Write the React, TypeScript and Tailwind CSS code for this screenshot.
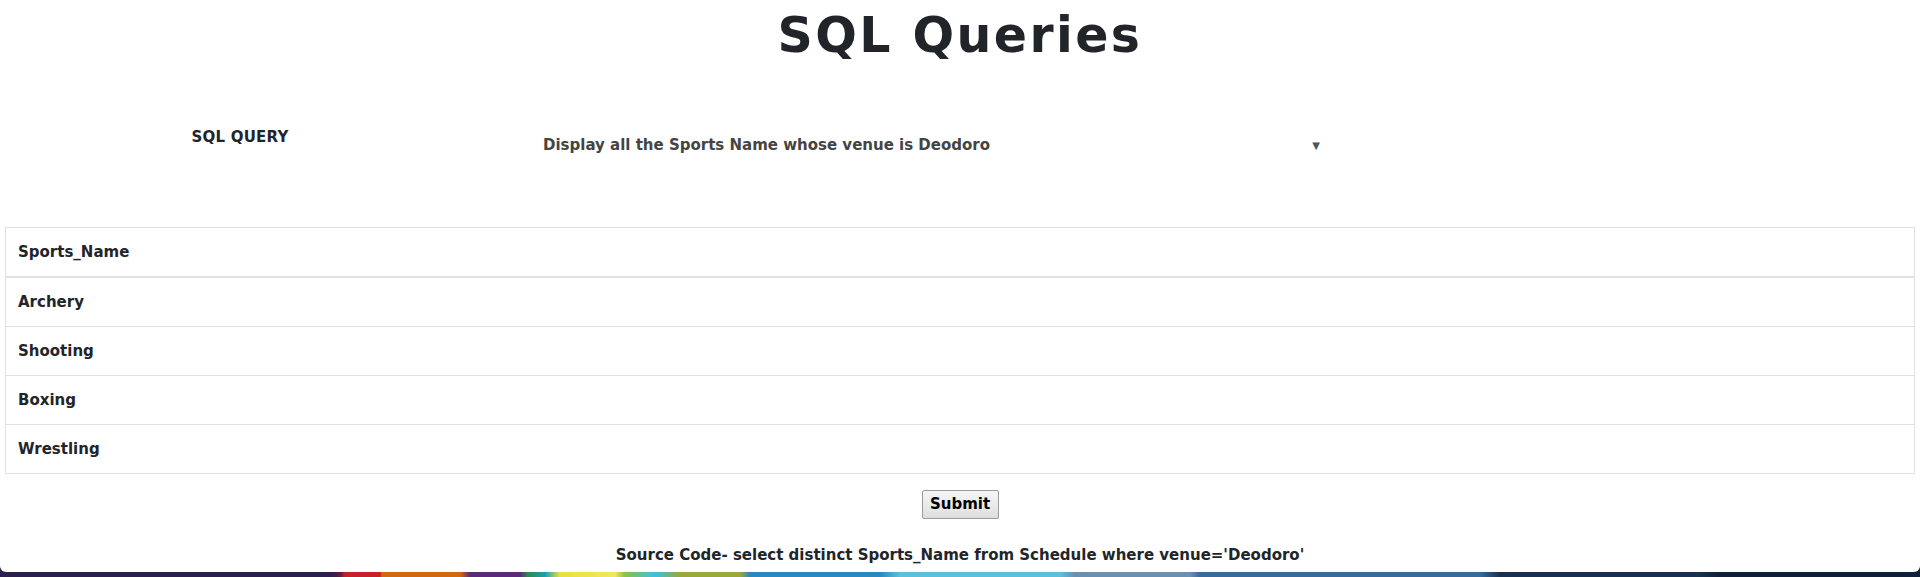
const rows = ['Archery', 'Shooting', 'Boxing', 'Wrestling'];

const font = { fontFamily: '"DejaVu Sans", "Noto Sans", sans-serif' };

const App = () => {
    return (
        <div
            className="h-[577px] w-full overflow-hidden bg-[linear-gradient(90deg,#2b1f4d_0px,#2b1f4d_330px,#5a1a3c_340px,#c4212b_345px,#c4212b_380px,#d2690f_382px,#d2690f_460px,#5c2a7a_470px,#5c2a7a_520px,#2e8a4a_528px,#1aa0b0_545px,#e8e040_560px,#f0e85a_615px,#8cc04a_625px,#3cc0e0_655px,#9aa83a_680px,#9aa83a_740px,#2a88c0_750px,#2a88c0_880px,#5cc0d8_900px,#5cc0d8_1060px,#6a90b0_1075px,#6a90b0_1190px,#3a6a9a_1200px,#3a6a9a_1480px,#1a3050_1500px,#1a3050_1700px,#102038_1720px,#102038_1920px)]"
            style={font}
        >
            <div className="h-[572px] bg-white rounded-b-md text-[#212529] font-bold">
                {/* Title */}
                <h1 className="text-center text-[49px] tracking-[2.4px] leading-[72px] font-bold">SQL Queries</h1>

                {/* Query picker */}
                <div className="flex mt-[52px] h-[40px]">
                    <div className="w-[480px] text-center text-[15px] tracking-[0.2px] leading-[24px] pt-[1px]">SQL QUERY</div>
                    <div className="flex items-center w-[850px] pl-[63px] pr-[10px] pt-[3px] text-[15px] text-[#444]">
                        <span className="flex-1">Display all the Sports Name whose venue is Deodoro</span>
                        <span className="text-[10px] text-[#555]">▼</span>
                    </div>
                </div>

                {/* Result table */}
                <div className="mx-[5px] mt-[63px] border border-[#dee2e6]">
                    <div className="px-3 py-3 text-[15px] leading-[24px] border-b-2 border-[#dee2e6]">Sports_Name</div>
                    {rows.map((r, i) => (
                        <div
                            key={r}
                            className={`px-3 py-3 text-[15px] leading-[24px] ${i < rows.length - 1 ? 'border-b border-[#dee2e6]' : ''}`}
                        >
                            {r}
                        </div>
                    ))}
                </div>

                <div className="flex justify-center mt-[16px]">
                    <button className="w-[77px] h-[29px] border border-[#9a9a9a] rounded-[2px] bg-[linear-gradient(#f6f6f6,#dedede)] text-[15px] font-bold text-black">
                        Submit
                    </button>
                </div>

                <p className="text-center text-[15px] mt-[24px] leading-[24px]">
                    Source Code- select distinct Sports_Name from Schedule where venue='Deodoro'
                </p>
            </div>
        </div>
    );
};

export default App;
